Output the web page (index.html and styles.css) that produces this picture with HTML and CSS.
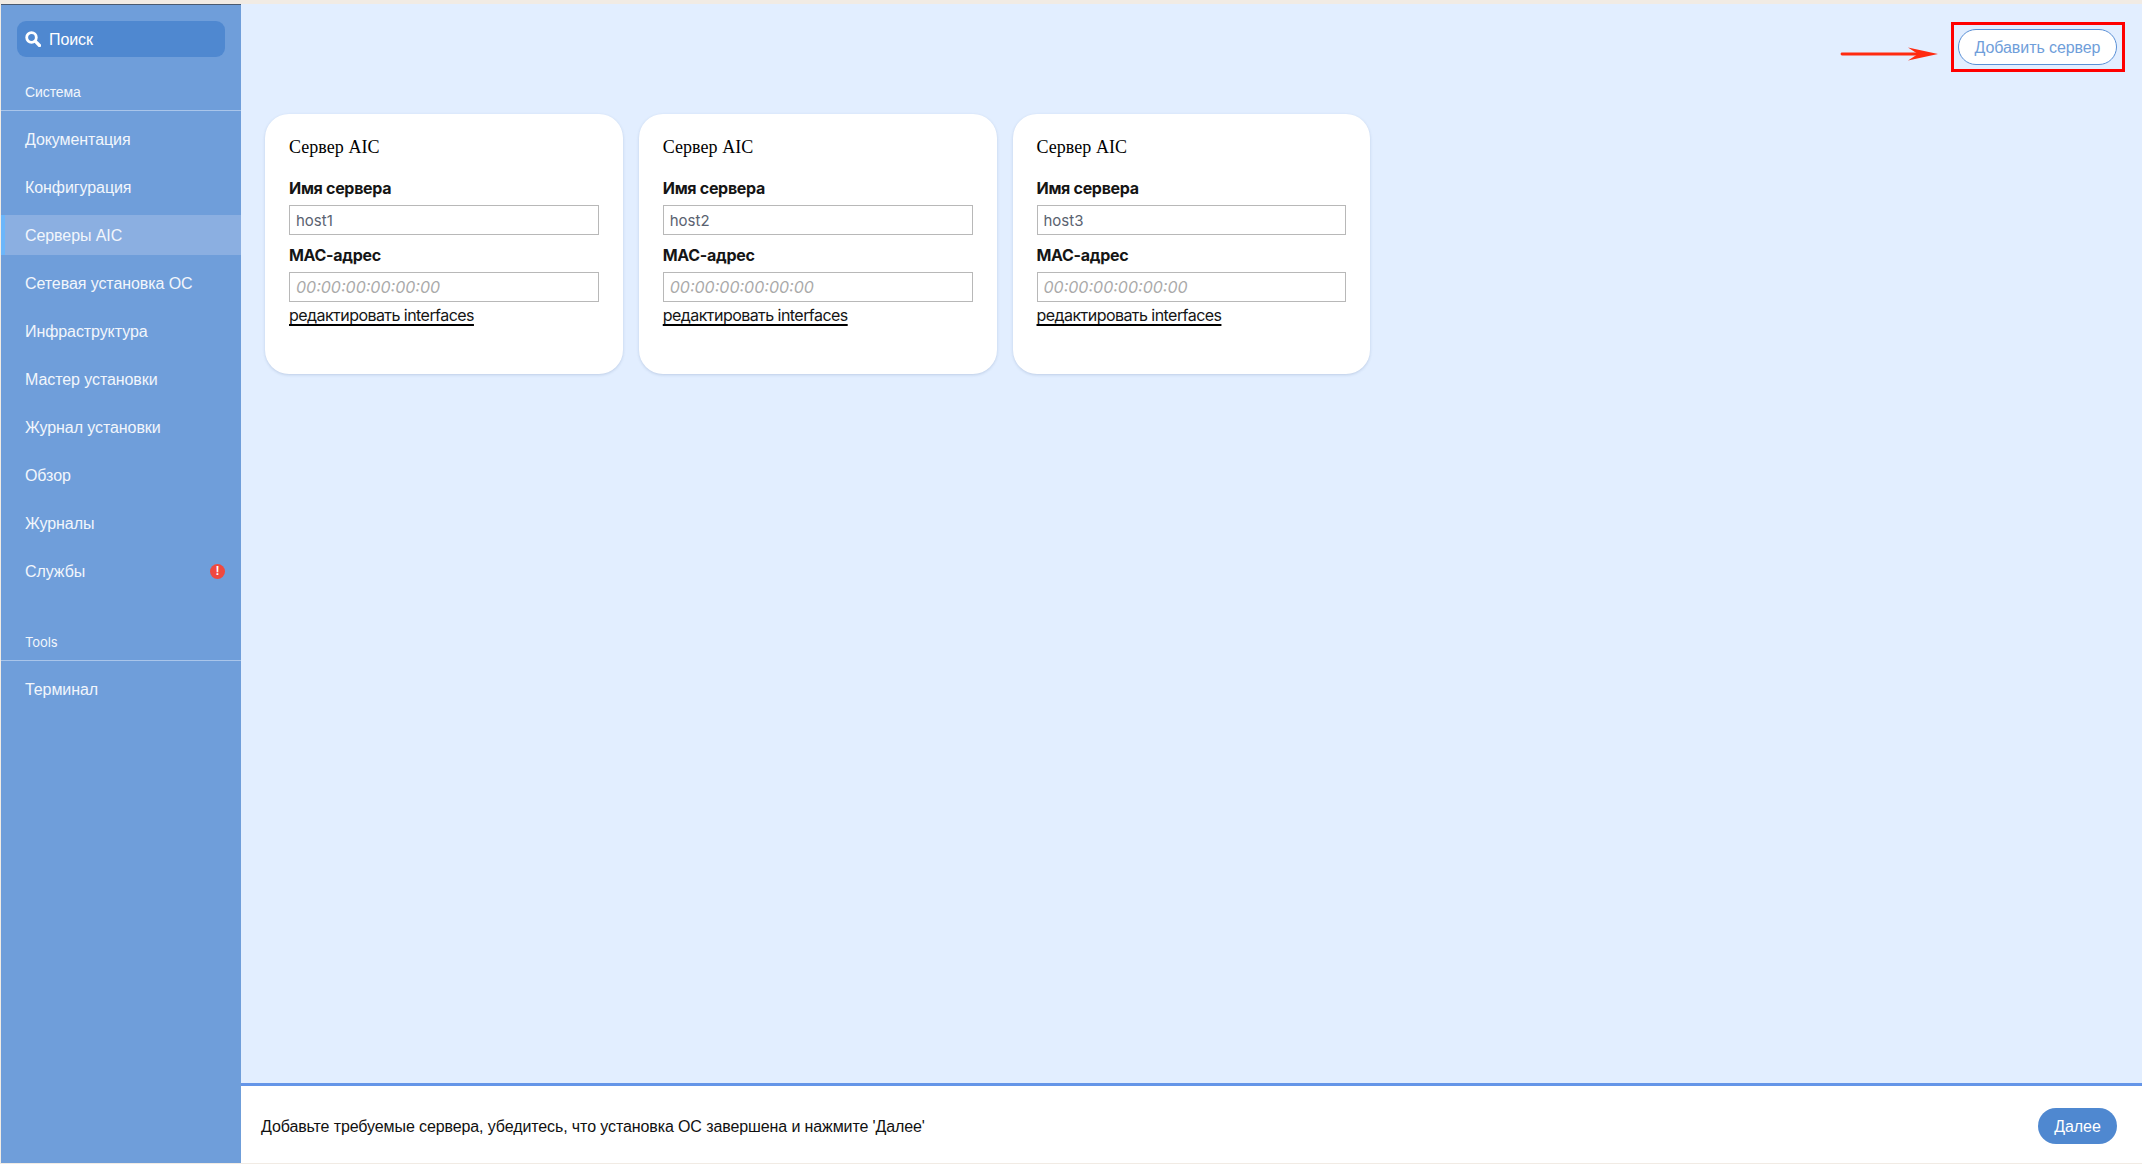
FILE: index.html
```html
<!DOCTYPE html>
<html lang="ru">
<head>
<meta charset="utf-8">
<title>Серверы AIC</title>
<link rel="stylesheet" href="styles.css">
</head>
<body>
<div class="shell">
  <aside class="sidebar">
    <div class="search">
      <svg class="search-icon" viewBox="0 0 16 16" width="16" height="16"><circle cx="6.500" cy="6.500" r="4.800" fill="none" stroke="#fff" stroke-width="2.800"/><path d="M10.200 10.200l4.300 4.300" stroke="#fff" stroke-width="3.200" stroke-linecap="round"/></svg>
      <span class="search-text">Поиск</span>
    </div>
    <div class="section-title">Система</div>
    <nav class="nav">
      <a class="nav-item">Документация</a>
      <a class="nav-item">Конфигурация</a>
      <a class="nav-item active">Серверы AIC</a>
      <a class="nav-item">Сетевая установка ОС</a>
      <a class="nav-item">Инфраструктура</a>
      <a class="nav-item">Мастер установки</a>
      <a class="nav-item">Журнал установки</a>
      <a class="nav-item">Обзор</a>
      <a class="nav-item">Журналы</a>
      <a class="nav-item">Службы<span class="badge">!</span></a>
    </nav>
    <div class="section-title tools"><span class="latin">Tools</span></div>
    <nav class="nav">
      <a class="nav-item">Терминал</a>
    </nav>
  </aside>
  <div class="content">
    <main class="main">
      <div class="toolbar">
        <svg class="arrow" viewBox="0 0 98 16" width="98" height="16"><path d="M2 8H84" stroke="#ff2a10" stroke-width="2.800" stroke-linecap="round"/><path d="M68 1.500L98 8 68 14.500L78 8z" fill="#ff2a10"/></svg>
        <div class="highlight">
          <button class="btn-add">Добавить сервер</button>
        </div>
      </div>
      <div class="cards">
        <section class="card">
          <h3 class="card-title">Сервер AIC</h3>
          <label class="field-label">Имя сервера</label>
          <input class="field" value="host1">
          <label class="field-label">МАС-адрес</label>
          <input class="field" placeholder="00:00:00:00:00:00">
          <a class="edit-link">редактировать interfaces</a>
        </section>
        <section class="card">
          <h3 class="card-title">Сервер AIC</h3>
          <label class="field-label">Имя сервера</label>
          <input class="field" value="host2">
          <label class="field-label">МАС-адрес</label>
          <input class="field" placeholder="00:00:00:00:00:00">
          <a class="edit-link">редактировать interfaces</a>
        </section>
        <section class="card">
          <h3 class="card-title">Сервер AIC</h3>
          <label class="field-label">Имя сервера</label>
          <input class="field" value="host3">
          <label class="field-label">МАС-адрес</label>
          <input class="field" placeholder="00:00:00:00:00:00">
          <a class="edit-link">редактировать interfaces</a>
        </section>
      </div>
    </main>
    <footer class="footer">
      <span class="footer-text">Добавьте требуемые сервера, убедитесь, что установка ОС завершена и нажмите 'Далее'</span>
      <button class="btn-next">Далее</button>
    </footer>
  </div>
</div>
</body>
</html>
```
FILE: styles.css
```css
* { box-sizing: border-box; }
html, body { height: 100%; }
body {
  margin: 0;
  background: #f1ebe4;
  padding: 4px 0 1px 1px;
  font-family: "Liberation Sans", sans-serif;
  font-size: 16px;
  letter-spacing: -.08px;
  overflow: hidden;
}
.shell { display: flex; height: 100%; }
.sidebar {
  width: 240px;
  flex: none;
  background: #6f9eda;
  border-top: 1px solid #4a5a70;
  color: #f2f6fc;
  padding-top: 16px;
}
.search {
  display: flex;
  align-items: center;
  gap: 8px;
  height: 36px;
  margin: 0 16px;
  padding: 0 8px;
  background: #4f88d0;
  border-radius: 9px;
  color: #fff;
}
.search-icon { flex: none; }
.search-text { padding-top: 2px; }
.section-title {
  height: 54px;
  padding: 25px 0 0 24px;
  font-size: 14px;
  line-height: 20px;
  border-bottom: 1px solid #a9c5ea;
}
.section-title.tools { height: 66px; padding-top: 37px; }
.latin { font-family: "Inter", sans-serif; font-size: 13px; }
.nav { display: flex; flex-direction: column; padding-top: 4px; }
.nav-item {
  display: flex;
  align-items: center;
  justify-content: space-between;
  height: 40px;
  margin: 4px 0;
  padding: 2px 16px 0 24px;
  line-height: 20px;
}
.nav-item.active {
  background: #8bafe1;
  border-left: 4px solid #6cb6fa;
  padding-left: 20px;
}
.badge {
  width: 15px;
  height: 15px;
  margin-top: -2px;
  border-radius: 50%;
  background: #f0493f;
  color: #fff;
  font-size: 12px;
  font-weight: 700;
  line-height: 15px;
  text-align: center;
}
.content { flex: 1; display: flex; flex-direction: column; min-width: 0; }
.main { flex: 1; background: #e2eeff; padding: 18px 17px 0 24px; }
.toolbar {
  display: flex;
  justify-content: flex-end;
  align-items: flex-start;
  height: 50px;
  gap: 13px;
}
.arrow { flex: none; margin-top: 24px; }
.highlight {
  border: 3px solid #ff0000;
  padding: 4px 5px 4px 4px;
  height: 50px;
  width: 174px;
}
.btn-add {
  display: block;
  width: 100%;
  height: 36px;
  border: 1px solid #5a90d6;
  border-radius: 18px;
  background: #fff;
  color: #6f9eda;
  font: 16px "Liberation Sans", sans-serif;
  letter-spacing: -.08px;
  padding: 1px 0 0;
}
.cards { display: flex; gap: 16px; margin-top: 42px; }
.card {
  width: 357.75px;
  height: 260px;
  padding: 20px 24px 0;
  background: #fff;
  border-radius: 24px;
  box-shadow: 0 1px 3px rgba(60, 90, 140, .22);
}
.card-title {
  margin: 0;
  font: 400 18px/26px "Liberation Serif", serif;
  letter-spacing: .04px;
  color: #000;
}
.field-label {
  display: block;
  margin-top: 8px;
  font: 700 16px/24px "Inter", sans-serif;
  color: #151515;
  letter-spacing: -.3px;
}
.card-title + .field-label { margin-top: 16px; }
.field {
  display: block;
  width: 100%;
  height: 30px;
  margin-top: 5px;
  padding: 0 6px;
  border: 1px solid #b8b8b8;
  border-radius: 0;
  background: #fff;
  font: 15px "Inter", sans-serif;
  color: #5a6270;
  outline: none;
}
.field::placeholder { color: #aaa; font-size: 16px; font-style: italic; opacity: 1; }
.edit-link {
  display: inline-block;
  margin-top: 2px;
  font: 16px/22px "Inter", sans-serif;
  color: #151515;
  letter-spacing: -.55px;
  text-decoration: underline 2px #000;
  text-underline-offset: 3px;
  text-decoration-skip-ink: auto;
}
.footer {
  display: flex;
  align-items: center;
  justify-content: space-between;
  height: 80px;
  padding: 3px 25px 0 20px;
  border-top: 3px solid #6495e8;
  background: #fff;
  color: #111;
}
.footer-text { padding-top: 1px; letter-spacing: -.105px; }
.btn-next {
  width: 79px;
  height: 36px;
  border: 0;
  border-radius: 18px;
  background: #4f88d0;
  color: #fff;
  font: 16px "Liberation Sans", sans-serif;
  letter-spacing: -.08px;
  padding: 1px 0 0;
}
```
